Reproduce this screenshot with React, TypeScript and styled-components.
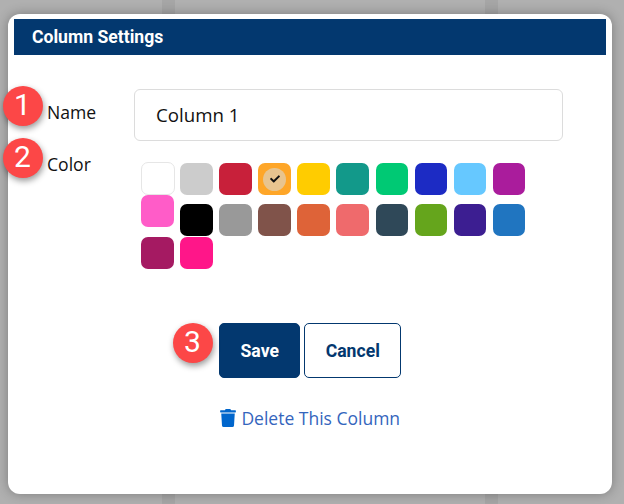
import styled, { createGlobalStyle } from "styled-components";
import { FaCheck, FaTrash } from "react-icons/fa";

const GlobalStyle = createGlobalStyle`
  html, body {
    margin: 0;
    padding: 0;
  }
`;

const swatches = [
  "#ffffff", "#cccccc", "#c8203a", "#fea628", "#ffcc00", "#12998a", "#00c974", "#1c2bc4", "#66c8ff", "#aa1c9c",
  "#ff5cc8", "#000000", "#999999", "#80534a", "#de6338", "#ef6a6c", "#2f4858", "#65a51c", "#3c1e91", "#2075c0",
  "#a51a62", "#ff1689",
];

export default function App() {
  return (
    <Page>
      <GlobalStyle />
      <Modal>
        <Header>Column Settings</Header>
        <Form>
          <Row>
            <Badge $left={-11} $top={31}>1</Badge>
            <Label>Name</Label>
            <NameInput defaultValue="Column 1" />
          </Row>
          <ColorRow>
            <Badge $left={-11} $top={-3}>2</Badge>
            <Label>Color</Label>
            <Palette>
              {swatches.map((color, i) => (
                <Swatch key={color} $color={color} $outlined={i === 0} $lifted={i === 10}>
                  {i === 3 && (
                    <Selected>
                      <FaCheck size={10} color="#111" />
                    </Selected>
                  )}
                </Swatch>
              ))}
            </Palette>
          </ColorRow>
          <Actions>
            <Badge $left={159} $top={0}>3</Badge>
            <SaveButton>Save</SaveButton>
            <CancelButton>Cancel</CancelButton>
          </Actions>
          <DeleteLink>
            <FaTrash size={18} color="#0066cc" />
            <span>Delete This Column</span>
          </DeleteLink>
        </Form>
      </Modal>
    </Page>
  );
}

const Page = styled.div`
  width: 624px;
  height: 504px;
  box-sizing: border-box;
  padding: 14px 12px 10px 8px;
  overflow: hidden;
  background:
    linear-gradient(
      to right,
      transparent 162px,
      #a6a6a6 162px,
      #a6a6a6 175px,
      transparent 175px,
      transparent 485px,
      #a6a6a6 485px,
      #a6a6a6 498px,
      transparent 498px
    ),
    #b0b0b0;
`;

const Modal = styled.div`
  width: 604px;
  height: 480px;
  box-sizing: border-box;
  padding: 5px 6px 0 5.5px;
  background: #fff;
  border-radius: 12px;
  box-shadow: 0 0 12px rgba(0, 0, 0, 0.3);
`;

const Header = styled.div`
  height: 36px;
  box-sizing: border-box;
  padding-left: 18.5px;
  background: #03386f;
  color: #fff;
  font: 700 17.6px/36px Roboto, sans-serif;
`;

const Form = styled.div`
  position: relative;
`;

const Row = styled.div`
  display: flex;
  padding: 34px 0 0 33.5px;
`;

const ColorRow = styled(Row)`
  padding-top: 11px;
  height: 129px;
  position: relative;
`;

const Label = styled.div`
  width: 87px;
  flex: none;
  margin-top: 11px;
  color: #111;
  font: 400 17.6px/24px "Open Sans", sans-serif;

  ${ColorRow} & {
    margin-top: 0;
  }
`;

const NameInput = styled.input`
  width: 429px;
  height: 52px;
  box-sizing: border-box;
  padding: 0 21px 2px;
  border: 1px solid #dcdcdc;
  border-radius: 6px;
  outline: none;
  color: #111;
  font: 400 18.7px "Open Sans", sans-serif;
`;

const Palette = styled.div`
  display: grid;
  grid-template-columns: repeat(10, 32.6px);
  grid-template-rows: 41px 33px 32px;
  column-gap: 6.5px;
  margin: 11px 0 0 7px;
  align-self: flex-start;
`;

const Swatch = styled.div<{ $color: string; $outlined: boolean; $lifted: boolean }>`
  display: flex;
  align-items: center;
  justify-content: center;
  height: 32px;
  box-sizing: border-box;
  border-radius: 7px;
  background: ${(p) => p.$color};
  ${(p) => p.$outlined && "border: 1.5px solid #e6e6e6; height: 33px; margin-top: -1px; width: 34px;"}
  ${(p) => p.$lifted && "margin-top: -9px;"}
`;

const Selected = styled.div`
  display: flex;
  align-items: center;
  justify-content: center;
  width: 23px;
  height: 23px;
  border-radius: 50%;
  background: rgba(217, 216, 212, 0.6);
`;

const Actions = styled.div`
  position: relative;
  display: flex;
  justify-content: center;
  gap: 4px;
  margin-top: 42px;
`;

const Badge = styled.div<{ $left: number; $top: number }>`
  position: absolute;
  left: ${(p) => p.$left}px;
  top: ${(p) => p.$top}px;
  width: 40px;
  height: 40px;
  border-radius: 50%;
  background: #fc4747;
  box-shadow: 1px 3px 6px rgba(0, 0, 0, 0.4);
  color: #fff;
  text-align: center;
  font: 400 30px/37px Roboto, sans-serif;
`;

const SaveButton = styled.button`
  width: 81px;
  height: 55px;
  padding: 0 0 0 1px;
  border: 1px solid #03386f;
  border-radius: 5px;
  background: #03386f;
  color: #fff;
  font: 700 17.6px Roboto, sans-serif;
`;

const CancelButton = styled(SaveButton)`
  width: 97px;
  background: #fff;
  color: #03386f;
`;

const DeleteLink = styled.div`
  display: flex;
  justify-content: center;
  align-items: center;
  gap: 4px;
  margin-top: 28px;
  color: #3465bd;
  font: 400 17.5px/24px "Open Sans", sans-serif;
`;
